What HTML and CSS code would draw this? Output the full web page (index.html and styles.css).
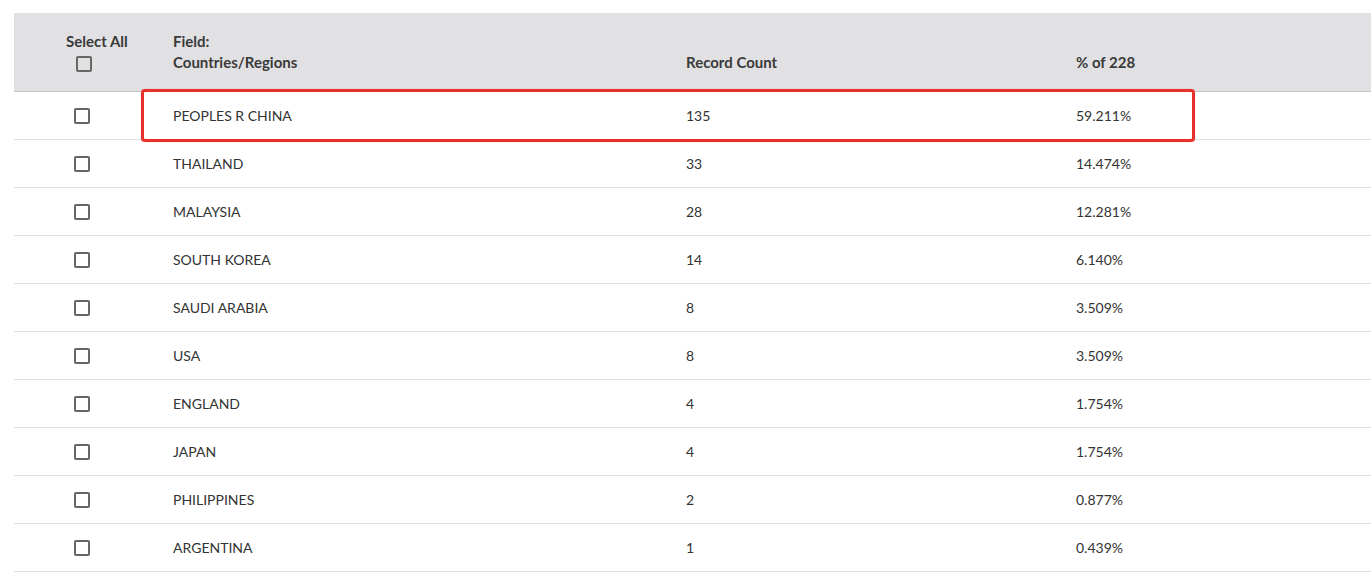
FILE: index.html
```html
<!DOCTYPE html>
<html>
<head>
<meta charset="utf-8">
<link rel="stylesheet" href="styles.css">
</head>
<body>
<div class="table">
  <div class="row head">
    <div class="cell sel"><span class="sel-label">Select All</span><span class="box head-box"></span></div>
    <div class="cell">Field:<br>Countries/Regions</div>
    <div class="cell">Record Count</div>
    <div class="cell">% of 228</div>
  </div>
  <div class="row hl">
    <div class="cell sel"><span class="box"></span></div>
    <div class="cell">PEOPLES R CHINA</div>
    <div class="cell">135</div>
    <div class="cell">59.211%</div>
    <div class="highlight"></div>
  </div>
  <div class="row">
    <div class="cell sel"><span class="box"></span></div>
    <div class="cell">THAILAND</div>
    <div class="cell">33</div>
    <div class="cell">14.474%</div>
  </div>
  <div class="row">
    <div class="cell sel"><span class="box"></span></div>
    <div class="cell">MALAYSIA</div>
    <div class="cell">28</div>
    <div class="cell">12.281%</div>
  </div>
  <div class="row">
    <div class="cell sel"><span class="box"></span></div>
    <div class="cell">SOUTH KOREA</div>
    <div class="cell">14</div>
    <div class="cell">6.140%</div>
  </div>
  <div class="row">
    <div class="cell sel"><span class="box"></span></div>
    <div class="cell">SAUDI ARABIA</div>
    <div class="cell">8</div>
    <div class="cell">3.509%</div>
  </div>
  <div class="row">
    <div class="cell sel"><span class="box"></span></div>
    <div class="cell">USA</div>
    <div class="cell">8</div>
    <div class="cell">3.509%</div>
  </div>
  <div class="row">
    <div class="cell sel"><span class="box"></span></div>
    <div class="cell">ENGLAND</div>
    <div class="cell">4</div>
    <div class="cell">1.754%</div>
  </div>
  <div class="row">
    <div class="cell sel"><span class="box"></span></div>
    <div class="cell">JAPAN</div>
    <div class="cell">4</div>
    <div class="cell">1.754%</div>
  </div>
  <div class="row">
    <div class="cell sel"><span class="box"></span></div>
    <div class="cell">PHILIPPINES</div>
    <div class="cell">2</div>
    <div class="cell">0.877%</div>
  </div>
  <div class="row">
    <div class="cell sel"><span class="box"></span></div>
    <div class="cell">ARGENTINA</div>
    <div class="cell">1</div>
    <div class="cell">0.439%</div>
  </div>
</div>
</body>
</html>
```
FILE: styles.css
```css
html, body {
  margin: 0;
  padding: 0;
  background: #fff;
}
body {
  font-family: Lato, "Noto Sans", sans-serif;
  font-size: 14px;
  color: #333;
  padding-top: 13px;
  padding-left: 14px;
}
.table {
  width: 1357px;
}
.row {
  position: relative;
  display: grid;
  grid-template-columns: 159px 513px 390px 1fr;
  height: 47px;
  align-items: center;
  border-bottom: 1px solid #e0e0e0;
}
.row.head {
  height: 78px;
  background: #e1e1e3;
  align-items: end;
  border-bottom: 1px solid #c9c9cc;
  font-weight: 700;
  font-size: 15px;
  color: #3a3a3a;
  line-height: 21px;
}
.head .cell {
  padding-bottom: 18px;
}
.sel {
  display: flex;
  flex-direction: column;
  align-items: flex-start;
  padding-left: 60px;
}
.head .sel {
  padding-left: 52px;
  padding-bottom: 19px;
}
.sel-label {
  display: block;
  margin-bottom: 4px;
}
.box {
  display: block;
  width: 12px;
  height: 12px;
  border: 2px solid #666;
  border-radius: 2px;
}
.head-box {
  margin-left: 10px;
}
.highlight {
  position: absolute;
  left: 127px;
  top: -3px;
  width: 1054px;
  height: 53px;
  box-sizing: border-box;
  border: 3px solid #e8302c;
  border-radius: 4px;
  box-shadow: 0 0 1px rgba(232, 48, 44, 0.5);
  pointer-events: none;
}
```
